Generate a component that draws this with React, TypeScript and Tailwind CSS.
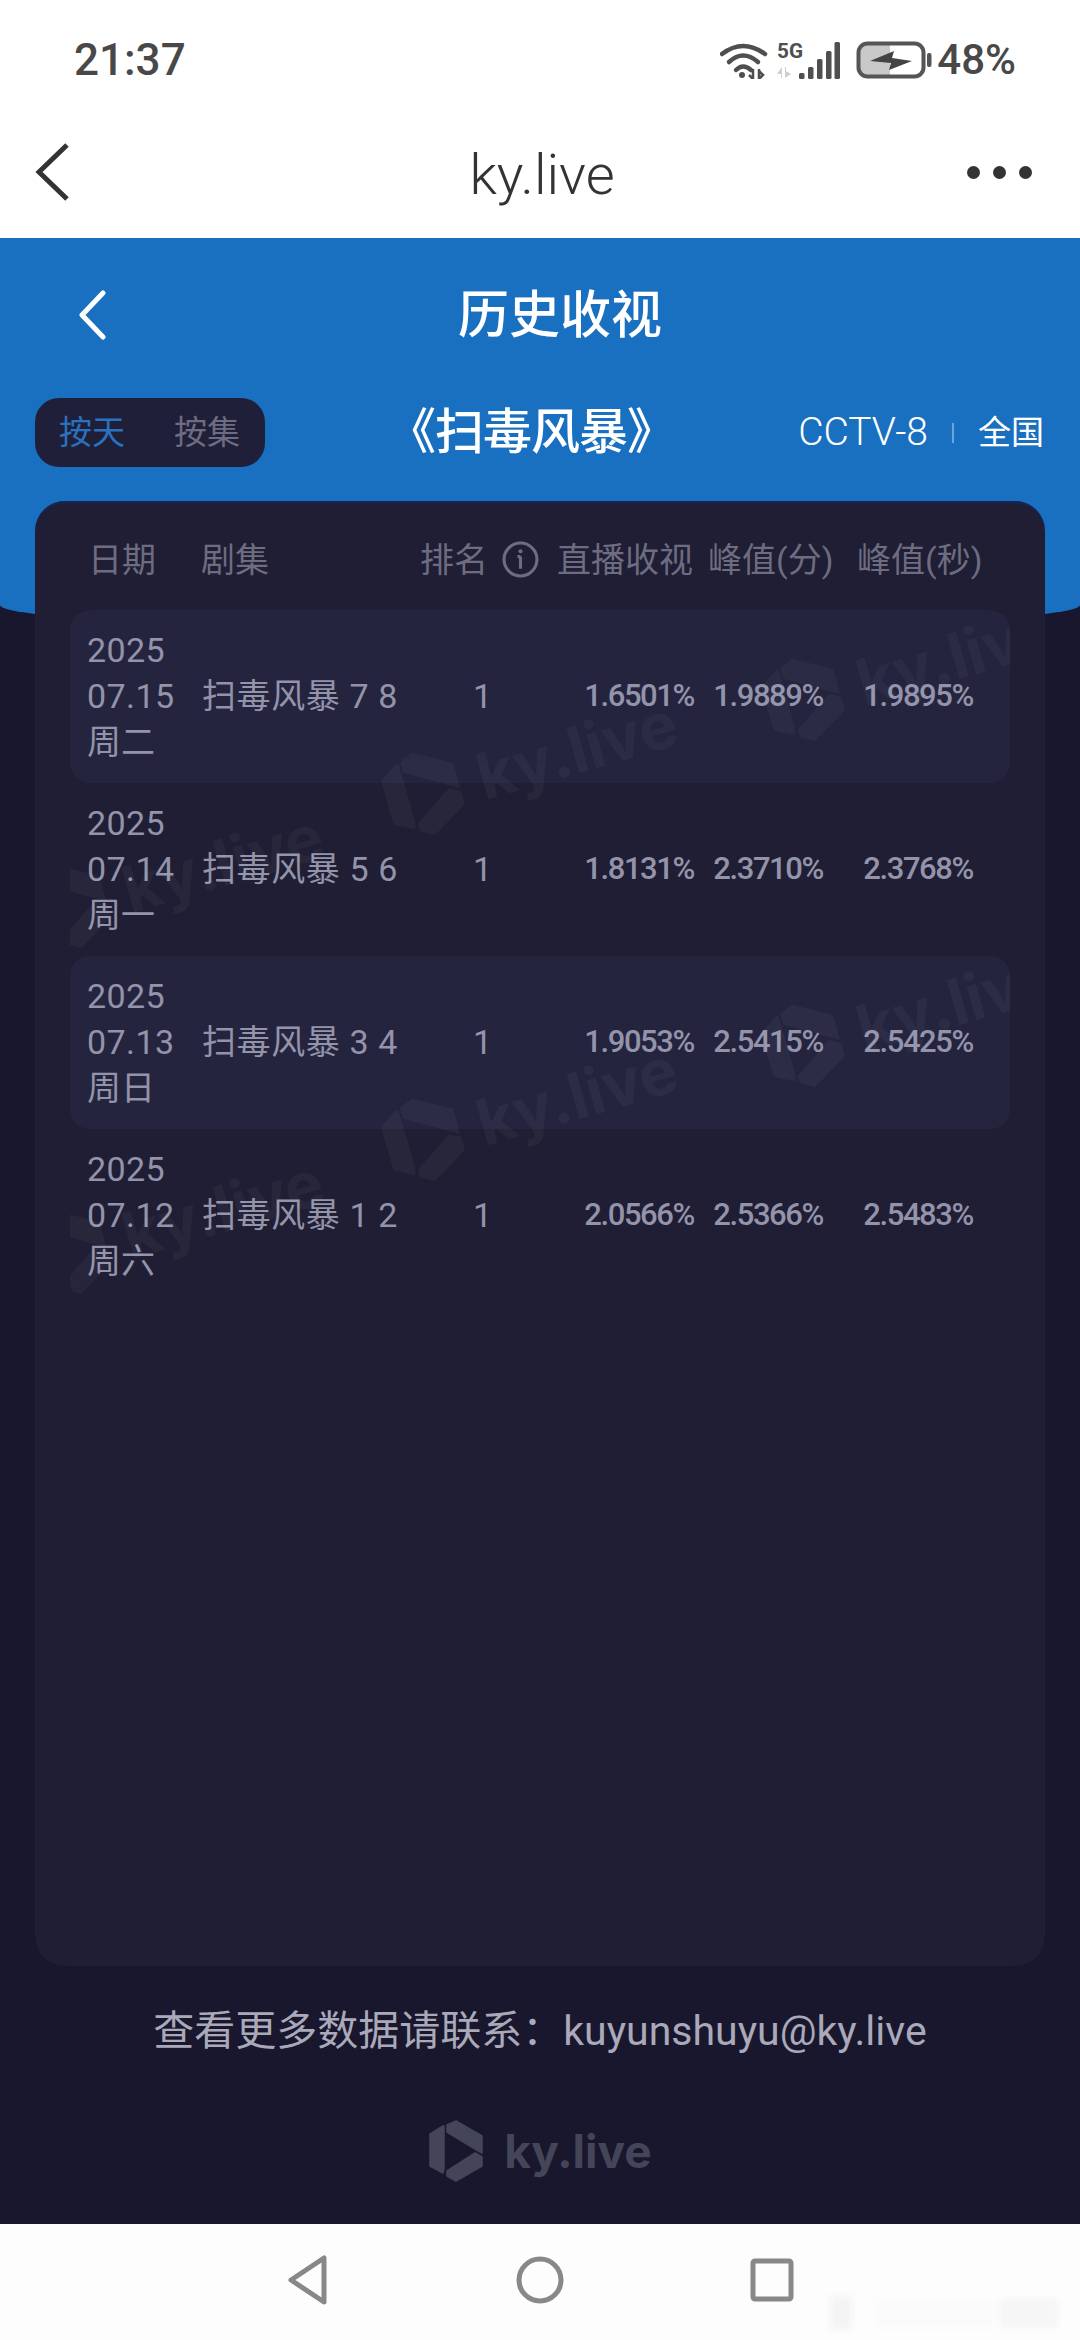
const CJK = "font-['Roboto','Noto_Sans_CJK_SC',sans-serif]";

const rows = [
  { d: "07.15", w: "周二", t: "扫毒风暴 7 8", a: "1.6501%", b: "1.9889%", c: "1.9895%", on: true },
  { d: "07.14", w: "周一", t: "扫毒风暴 5 6", a: "1.8131%", b: "2.3710%", c: "2.3768%", on: false },
  { d: "07.13", w: "周日", t: "扫毒风暴 3 4", a: "1.9053%", b: "2.5415%", c: "2.5425%", on: true },
  { d: "07.12", w: "周六", t: "扫毒风暴 1 2", a: "2.0566%", b: "2.5366%", c: "2.5483%", on: false },
];

function Logo({ className }: { className: string }) {
  return (
    <svg viewBox="0 0 56 62" className={className} fill="currentColor" stroke="currentColor" strokeWidth="1.5" strokeLinejoin="round">
      <path d="M15 6 L2 14 V46 L15 53 L16 48 V6 Z" />
      <path d="M19 5 L28 1 L54 16 V33 L47 29 L19 12 Z" />
      <path d="M54 37 V46 L28 61 L19 56 V51 L47 33 Z" />
    </svg>
  );
}

function Mark({ pos }: { pos: string }) {
  return (
    <div className={`absolute flex items-center gap-[18px] -rotate-[16deg] text-[#ffffff] opacity-[0.035] ${pos}`}>
      <Logo className="w-[78px] h-[86px] shrink-0" />
      <span className="font-['Inter',sans-serif] font-bold text-[64px] leading-none whitespace-nowrap">ky.live</span>
    </div>
  );
}

function Wifi() {
  return (
    <svg viewBox="0 0 48 38" className="w-[48px] h-[38px]" fill="none" stroke="#4f4f4f" strokeWidth="4.5" strokeLinecap="round">
      <path d="M2 13 Q23 -3 45 13" />
      <path d="M9 21 Q23 8 38 21" />
      <path d="M16 29 Q23 22 31 29" />
      <circle cx="22" cy="34" r="3" fill="#4f4f4f" stroke="none" />
      <path d="M33 28 V38 M29 34 L33 38 V28 M39 28 V38 L43 34 L39 30" strokeWidth="2.5" strokeLinecap="butt" />
    </svg>
  );
}

function Signal() {
  return (
    <svg viewBox="0 0 64 38" className="w-[64px] h-[38px]" fill="#4f4f4f">
      <text x="1" y="17" fontFamily="Roboto, sans-serif" fontWeight="700" fontSize="20" textLength="26" lengthAdjust="spacingAndGlyphs">5G</text>
      <path d="M1 33 L6 26 V37 H5 V33 Z M9 26 H10 V30 L15 33 L9 37 Z" fill="#cfcfcf" />
      <rect x="23" y="32" width="5.5" height="6" rx="1.5" />
      <rect x="32" y="26" width="5.5" height="12" rx="1.5" />
      <rect x="41" y="18" width="5.5" height="20" rx="1.5" />
      <rect x="50" y="10" width="5.5" height="28" rx="1.5" />
      <rect x="58.5" y="1" width="5.5" height="37" rx="1.5" />
    </svg>
  );
}

function Battery() {
  return (
    <svg viewBox="0 0 76 38" className="w-[76px] h-[38px]">
      <rect x="3" y="3" width="64" height="32" rx="8" fill="#fff" />
      <path d="M3 11 a8 8 0 0 1 8 -8 H34 V35 H11 a8 8 0 0 1 -8 -8 Z" fill="#c9c9c9" />
      <rect x="2.5" y="2.5" width="65" height="33" rx="9" fill="none" stroke="#555" strokeWidth="4" />
      <path d="M14 20 L38 10 L36 17 L56 20 L33 29 L35 22 Z" fill="#444" />
      <rect x="71" y="12" width="4.5" height="14" rx="2" fill="#555" />
    </svg>
  );
}

export default function App() {
  return (
    <div className={`w-[1080px] h-[2340px] flex flex-col bg-[#18172d] overflow-hidden ${CJK}`}>
      <div className="h-[238px] shrink-0 bg-white flex flex-col">
        <div className="h-[120px] shrink-0 flex items-center justify-between pl-[74px] pr-[64px]">
          <span className="text-[44px] font-medium text-[#484848] leading-none">21:37</span>
          <div className="flex items-center gap-[8px]">
            <Wifi />
            <Signal />
            <div className="w-0" />
            <Battery />
            <span className="text-[42px] font-medium text-[#484848] leading-none ml-[-3px]">48%</span>
          </div>
        </div>
        <div className="flex-1 flex items-center pl-[34px] pr-[48px] pb-[14px]">
          <div className="flex-1">
            <svg viewBox="0 0 36 58" className="w-[36px] h-[58px]" fill="none" stroke="#333" strokeWidth="5">
              <path d="M33 2 L5 29 L33 56" />
            </svg>
          </div>
          <span className="text-[56px] text-[#333333] leading-none font-light ml-[6px] mr-[-12px] mt-[6px]">ky.live</span>
          <div className="flex-1 flex justify-end gap-[13px]">
            <div className="w-[13px] h-[13px] rounded-full bg-[#333333]" />
            <div className="w-[13px] h-[13px] rounded-full bg-[#333333]" />
            <div className="w-[13px] h-[13px] rounded-full bg-[#333333]" />
          </div>
        </div>
      </div>

      <div className="relative flex-1 flex flex-col">
        <div className="absolute inset-x-0 top-0 h-[392px] bg-[#1a70c0] rounded-b-[540px_25px]" />

        <div className="relative h-[263px] shrink-0 flex flex-col">
          <div className="h-[112px] relative flex items-center justify-center pl-[40px] shrink-0">
            <svg viewBox="0 0 30 50" className="absolute left-[77px] top-[52px] w-[30px] h-[50px]" fill="none" stroke="#ffffff" strokeWidth="5" strokeLinecap="round" strokeLinejoin="round">
              <path d="M26 3 L5 25 L26 47" />
            </svg>
            <span className="text-[51px] font-medium text-white leading-none mt-[42px]">历史收视</span>
          </div>
          <div className="flex items-center pl-[35px] pr-[36px] mt-[48px]">
            <div className="w-[230px] h-[69px] rounded-[24px] bg-[#1f1f3a] flex items-center gap-[49px] pl-[24px] text-[33px]">
              <span className="text-[#2a72bd]">按天</span>
              <span className="text-[#6d6c80]">按集</span>
            </div>
            <span className="ml-[122px] text-[49px] text-white leading-none font-medium tracking-[-1px]">《扫毒风暴》</span>
            <div className="ml-auto flex items-center text-white leading-none">
              <span className="text-[39px] font-light">CCTV-8</span>
              <div className="w-[2px] h-[20px] bg-[#6aa5de] mx-[24px]" />
              <span className="text-[33px]">全国</span>
            </div>
          </div>
        </div>

        <div className="relative mx-[35px] h-[1465px] shrink-0 rounded-[30px] bg-[#1f1e34] shadow-[inset_0_3px_2px_-1px_#14295f] flex flex-col px-[35px]">
          <div className="h-[109px] shrink-0 grid grid-cols-[113px_219px_136px_137px_164px_1fr] items-center text-[34px] text-[#6d6c80] leading-none pb-[6px] pt-[14px] -ml-[1px] pl-[19px]">
            <span>日期</span>
            <span>剧集</span>
            <div className="flex items-center gap-[14px]">
              <span>排名</span>
              <svg viewBox="0 0 36 36" className="w-[37px] h-[37px]" fill="none" stroke="#6d6c80" strokeWidth="3">
                <circle cx="18" cy="18" r="16" />
                <path d="M18 15 V27 M15 15 H18" strokeWidth="3" />
                <circle cx="18" cy="10" r="2" fill="#6d6c80" stroke="none" />
              </svg>
            </div>
            <span className="text-right whitespace-nowrap">直播收视</span>
            <span className="pl-[15px] whitespace-nowrap">峰值(分)</span>
            <span className="whitespace-nowrap">峰值(秒)</span>
          </div>

          <div className="relative overflow-hidden rounded-[20px]">
            <div>
              {rows.map((r) => (
                <div
                  key={r.d}
                  className={`h-[173px] grid grid-cols-[115px_219px_136px_137px_129px_150px] items-center pl-[17px] pb-[2px] rounded-[20px] text-[#9393aa] ${r.on ? "bg-[#25243f]" : ""}`}
                >
                  <div className="text-[34px] leading-[46px] tracking-[0.4px]">
                    <div>2025</div>
                    <div>{r.d}</div>
                    <div className="tracking-normal">{r.w}</div>
                  </div>
                  <span className="text-[34px] leading-none whitespace-nowrap tracking-[0.6px]">{r.t}</span>
                  <span className="text-[34px] leading-none pl-[52px]">1</span>
                  <span className="text-[31px] font-medium leading-none text-right tracking-[-1.4px]">{r.a}</span>
                  <span className="text-[31px] font-medium leading-none text-right tracking-[-1.4px]">{r.b}</span>
                  <span className="text-[31px] font-medium leading-none text-right tracking-[-1.4px]">{r.c}</span>
                </div>
              ))}
            </div>
            <Mark pos="left-[310px] top-[110px]" />
            <Mark pos="left-[-44px] top-[223px]" />
            <Mark pos="left-[690px] top-[16px]" />
            <Mark pos="left-[310px] top-[456px]" />
            <Mark pos="left-[-44px] top-[569px]" />
            <Mark pos="left-[690px] top-[362px]" />
          </div>
        </div>

        <div className="flex-1 relative flex flex-col items-center">
          <div className="mt-[45px] text-[41px] leading-none text-[#a9a9b9] whitespace-nowrap">查看更多数据请联系：kuyunshuyu@ky.live</div>
          <div className="mt-[68px] flex items-center gap-[20px] text-[#45455a]">
            <Logo className="w-[56px] h-[62px] shrink-0" />
            <span className="font-['Inter',sans-serif] font-bold text-[46px] leading-none">ky.live</span>
          </div>
        </div>
      </div>

      <div className="h-[116px] shrink-0 bg-[#fdfdfd] relative flex items-center justify-center gap-[186px] pb-[4px]">
        <svg viewBox="0 0 44 50" className="w-[44px] h-[50px]" fill="none" stroke="#888888" strokeWidth="5" strokeLinejoin="round">
          <path d="M38 3 V47 L5 25 Z" />
        </svg>
        <svg viewBox="0 0 48 48" className="w-[48px] h-[48px]" fill="none" stroke="#888888" strokeWidth="5">
          <circle cx="24" cy="24" r="21" />
        </svg>
        <svg viewBox="0 0 44 44" className="w-[44px] h-[44px]" fill="none" stroke="#888888" strokeWidth="5" strokeLinejoin="round">
          <rect x="3" y="3" width="38" height="38" rx="2" />
        </svg>
        <div className="absolute left-[830px] top-[72px] w-[22px] h-[34px] bg-[#f4f4f4] blur-[3px]" />
        <div className="absolute left-[875px] top-[78px] w-[120px] h-[26px] bg-[#fafafa] blur-[3px]" />
        <div className="absolute left-[1000px] top-[74px] w-[58px] h-[30px] bg-[#f6f6f6] blur-[2px]" />
      </div>
    </div>
  );
}
